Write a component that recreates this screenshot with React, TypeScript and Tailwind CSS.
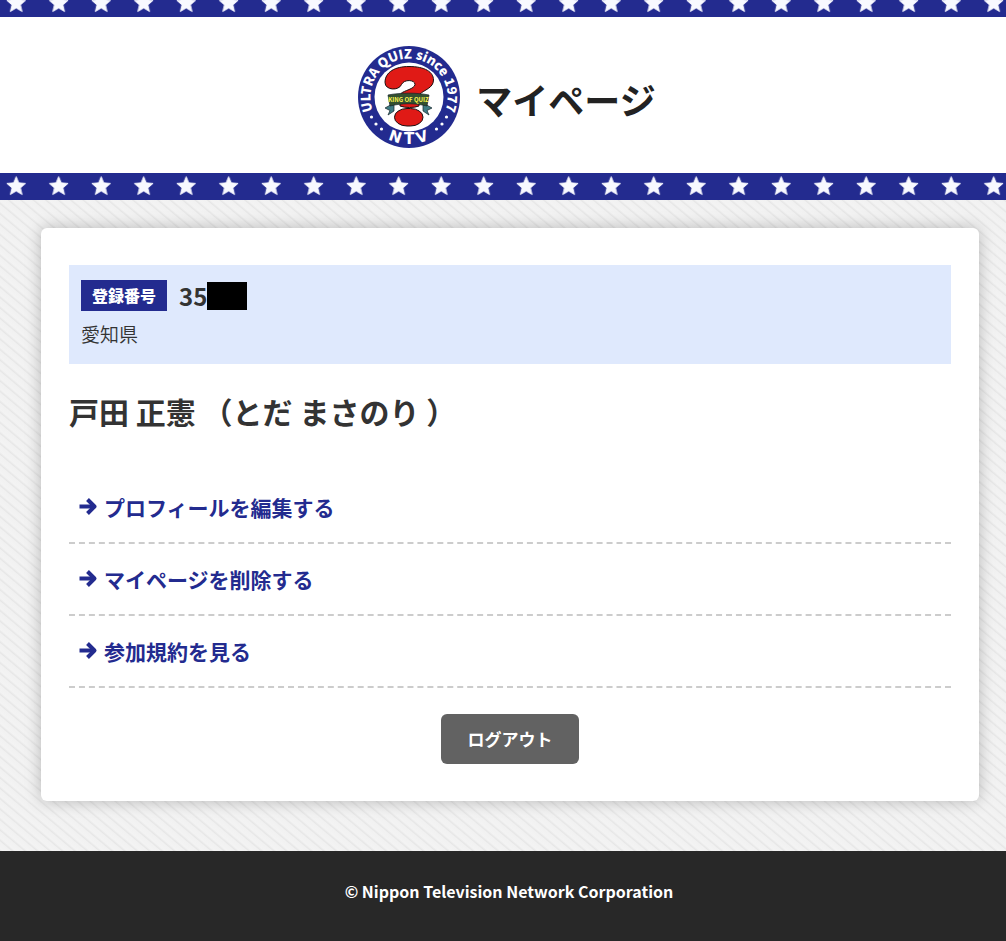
import React from "react";

type MenuItem = {
  id: number;
  label: string;
};

const menuItems: MenuItem[] = [
  { id: 1, label: "プロフィールを編集する" },
  { id: 2, label: "マイページを削除する" },
  { id: 3, label: "参加規約を見る" },
];

const StarBand: React.FC<{ id: string; className: string; top: number }> = ({
  id,
  className,
  top,
}) => (
  <div className={`w-full bg-[#232b8f] ${className}`}>
    <svg width="100%" height="100%" className="block" aria-hidden="true">
      <defs>
        <pattern
          id={id}
          x="-5"
          y={top}
          width="42.5"
          height="27"
          patternUnits="userSpaceOnUse"
        >
          <path
            d="M21.2 3.6l2.6 6.2 6.8.6-5.1 4.5 1.6 6.7-5.9-3.5-5.9 3.5 1.6-6.7-5.1-4.5 6.8-.6z"
            fill="#f8f9ff"
            stroke="#f8f9ff"
            strokeWidth="0.8"
          />
        </pattern>
      </defs>
      <rect width="100%" height="100%" fill={`url(#${id})`} />
    </svg>
  </div>
);

const ArrowIcon: React.FC = () => (
  <svg
    className="h-5 w-5 shrink-0"
    viewBox="0 0 20 20"
    fill="none"
    stroke="currentColor"
    strokeWidth="4"
    aria-hidden="true"
  >
    <path d="M0.500 9.500H15" />
    <path d="M8.500 2.500L15.500 9.500L8.500 16.500" strokeLinejoin="round" />
  </svg>
);

const QuizLogo: React.FC = () => (
  <svg
    className="h-[102px] w-[102px] shrink-0 overflow-visible"
    viewBox="0 0 102 102"
    role="img"
    aria-label="ULTRA QUIZ"
  >
    <defs>
      <path id="arcTop" d="M18 71.5A38.7 38.7 0 1 1 84 71.5" />
    </defs>
    <circle cx="51" cy="51" r="51" fill="#232b8f" />
    <circle cx="51" cy="51" r="34.5" fill="#fff" />
    <text
      className="font-['Noto_Sans_CJK_JP',sans-serif] text-[13px] font-black"
      fill="#fff"
      textAnchor="middle"
    >
      <textPath href="#arcTop" startOffset="50%">
        ULTRA QUIZ since 1977
      </textPath>
    </text>
    <g
      className="font-['DejaVu_Sans',sans-serif] text-[15px] font-bold"
      fill="#fff"
      textAnchor="middle"
    >
      <text transform="rotate(19 51 51)" x="51" y="98">
        N
      </text>
      <text x="51" y="98">
        T
      </text>
      <text transform="rotate(-18 51 51)" x="51" y="98">
        V
      </text>
    </g>
    <g fill="#fff">
      <circle cx="13.5" cy="71" r="1.6" />
      <circle cx="18" cy="78" r="1.6" />
      <circle cx="23.5" cy="83" r="1.6" />
      <circle cx="88.5" cy="71" r="1.6" />
      <circle cx="84" cy="78" r="1.6" />
      <circle cx="78.5" cy="83" r="1.6" />
    </g>
    <g fill="#e01a16" stroke="#1a1010" strokeWidth="1">
      <path d="M27 36.5C27 26 37 20.5 51 20.5C67 20.5 75.5 26 75.5 34C75.5 42 66 44 62 48V54H43V47.500C46 44.500 56.500 43 57 38.500C57 33.500 46 33 43.500 38.500C41 45 27 44.500 27 36.5Z" />
      <path d="M42 54H61V60C56 62 47 62 42 60Z" />
      <rect x="36.5" y="62.5" width="28.5" height="17.5" rx="12.5" ry="8.7" />
    </g>
    <g stroke="#16242a" strokeWidth="0.7">
      <path d="M27 62L36 57V65L30 69L32 64.5Z" fill="#3f7d85" />
      <path d="M74 62L65 57V65L71 69L69 64.5Z" fill="#3f7d85" />
      <path
        d="M30 49C43 46.5 58 46.5 71 49L69 60C57 57 44 57 32 60Z"
        fill="#33502f"
      />
    </g>
    <text
      x="50.5"
      y="55.5"
      className="font-['Noto_Sans_CJK_JP',sans-serif] text-[6px] font-bold"
      fill="#fbf651"
      textAnchor="middle"
    >
      KING OF QUIZ
    </text>
  </svg>
);

const Header: React.FC = () => (
  <header>
    <StarBand id="starsTop" className="h-[17px]" top={-10} />
    <div className="flex h-[156px] items-center justify-center gap-4 bg-white pt-1 pl-2">
      <QuizLogo />
      <h1 className="pt-1 text-4xl font-bold text-[#222]">マイページ</h1>
    </div>
    <StarBand id="starsBottom" className="h-[27px]" top={0} />
  </header>
);

export const MyPage: React.FC = () => {
  return (
    <div className="flex min-h-screen flex-col bg-[#282828] font-['Noto_Sans_CJK_JP',sans-serif] text-[#333]">
      <Header />
      <main className="bg-[#f1f1f1] bg-[repeating-linear-gradient(40deg,#e6e6e6_0px,#f3f3f3_2px,#f1f1f1_7px,#e6e6e6_8px)] pt-7 pr-[27px] pb-[50px] pl-[41px]">
        <div className="rounded-md bg-white px-7 py-[37px] shadow-[0_0_16px_rgba(0,0,0,0.25)]">
          <div className="bg-[#dfe9fd] px-3 pt-[15px] pb-4">
            <div className="flex items-center">
              <span className="bg-[#232b8f] px-[11px] text-base leading-[31px] font-black text-white">
                登録番号
              </span>
              <span className="ml-3 text-2xl leading-[31px] font-bold">35</span>
              <span className="h-7 w-10 bg-black" />
            </div>
            <p className="mt-2 text-[19px] leading-[29px] font-[350]">愛知県</p>
          </div>
          <h2 className="mt-6 text-3xl leading-[46px] font-bold">
            戸田 正憲 （とだ まさのり ）
          </h2>
          <ul className="mt-[38px]">
            {menuItems.map((item) => (
              <li
                key={item.id}
                className="border-b-2 border-dashed border-[#ccc] px-[10px]"
              >
                <a
                  href="#"
                  className="flex items-center gap-[5px] text-[21px] leading-[70px] font-bold text-[#232b8f]"
                >
                  <ArrowIcon />
                  {item.label}
                </a>
              </li>
            ))}
          </ul>
          <div className="mt-[26px] text-center">
            <button
              type="button"
              className="mx-auto block h-[50px] w-[138px] rounded-md bg-[#626262] text-[17px] font-bold text-white"
            >
              ログアウト
            </button>
          </div>
        </div>
      </main>
      <footer className="py-7 pl-3 text-center text-base leading-6 font-bold text-white">
        © Nippon Television Network Corporation
      </footer>
    </div>
  );
};

export default MyPage;
